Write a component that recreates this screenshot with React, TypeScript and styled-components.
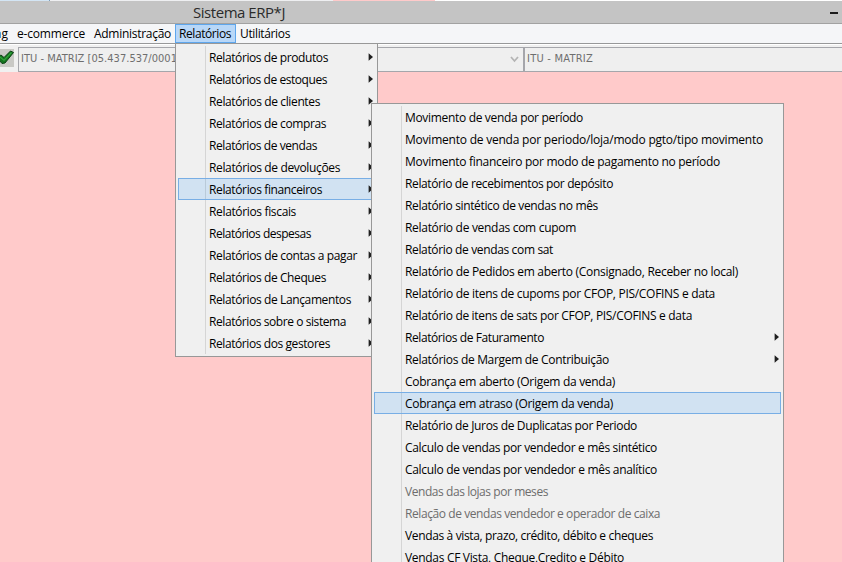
import React, { useLayoutEffect, useRef, useState } from "react";
import styled, { createGlobalStyle, css } from "styled-components";

const GlobalStyle = createGlobalStyle`
  * { box-sizing: border-box; }
  html, body { margin: 0; height: 100%; overflow: hidden; }
  body {
    font: 12px/22px "Open Sans", "Noto Sans", sans-serif;
    color: #000;
    background: #ffcaca;
  }
`;

const Window = styled.div`
  position: relative;
  width: 842px;
  height: 562px;
  overflow: hidden;
  background: #ffcaca;
`;

const BackdropStrip = styled.div`
  display: grid;
  grid-template-columns: 49px 1px 283px 102px 1fr;
  height: 1px;
`;

const StripPart = styled.span<{ $color: string }>`
  background: ${(p) => p.$color};
`;

const TitleBar = styled.header`
  display: flex;
  align-items: center;
  justify-content: space-between;
  height: 23px;
  padding: 0 4px 0 193px;
  background: #c4c4c4;
  border-bottom: 1px solid #a2a2a2;
  font-size: 15px;
  color: #2b2b2b;
`;

const MinimizeIcon = styled.span`
  width: 8px;
  height: 2px;
  margin-top: 2px;
  background: #1c1c1c;
`;

const MenuBar = styled.nav`
  display: flex;
  height: 20px;
  background: #f5f6f8;
  border-bottom: 1px solid #979899;
`;

const MenuBarItem = styled.span<{ $width: number; $active?: boolean; $clipped?: boolean }>`
  display: flex;
  flex: none;
  justify-content: ${(p) => (p.$clipped ? "flex-end" : "flex-start")};
  width: ${(p) => p.$width}px;
  height: 19px;
  line-height: 20px;
  padding: ${(p) => (p.$clipped ? "0 5px 0 0" : "0 0 0 4px")};
  ${(p) =>
    p.$active &&
    css`
      padding-left: 3px;
      line-height: 18px;
      background: #b8d7f8;
      border: 1px solid #5ea6ec;
    `}
`;

const ToolBar = styled.div`
  display: flex;
  height: 28px;
  padding: 2px 0 1px;
  background: #f0f0f0;
  border-top: 1px solid #fff;
`;

const CheckButton = styled.span`
  flex: none;
  width: 18px;
  height: 25px;

  svg {
    display: block;
  }
`;

const Field = styled.div<{ $width: number }>`
  display: flex;
  flex: none;
  align-items: center;
  justify-content: space-between;
  width: ${(p) => p.$width}px;
  height: 25px;
  padding: 0 4px 0 2px;
  border: 1px solid #a5a6ab;
  background: #efefef;
  color: #6e6e6e;
  font: 11px/21px "DejaVu Sans Condensed", "DejaVu Sans", sans-serif;
`;

const FieldText = styled.span`
  display: block;
  margin-top: -2px;
`;

const Menu = styled.div<{ $x: number; $y: number; $width: number }>`
  position: absolute;
  left: ${(p) => p.$x}px;
  top: ${(p) => p.$y}px;
  width: ${(p) => p.$width}px;
  padding: 2px;
  border: 1px solid #989898;
  background: linear-gradient(#d5d5d5, #d5d5d5) 29px 2px / 1px calc(100% - 4px) no-repeat #f0f0f0;
`;

const MenuRow = styled.div<{ $selected?: boolean; $disabled?: boolean }>`
  display: flex;
  align-items: center;
  justify-content: space-between;
  height: 22px;
  padding: 1px 0 0 30px;
  border: 1px solid transparent;
  white-space: nowrap;
  line-height: 20px;
  color: ${(p) => (p.$disabled ? "#6d6d6d" : "#000")};
  ${(p) =>
    p.$selected &&
    css`
      border-color: #78aee5;
      background: linear-gradient(#b9cad9, #b9cad9) 26px 0 / 1px 100% no-repeat #d1e2f2;
    `}
`;

const Label = styled.span`
  display: inline-block;
  white-space: pre;
`;

const ArrowIcon = styled.svg`
  flex: none;
  display: block;
  margin-top: -2px;
`;

/* Text tracked so that it fills the given width. */
function Tracked({ text, width }: { text: string; width: number }) {
  const ref = useRef<HTMLSpanElement>(null);
  const [spacing, setSpacing] = useState(0);
  useLayoutEffect(() => {
    const natural = ref.current!.getBoundingClientRect().width - spacing * text.length;
    setSpacing((width - natural) / text.length);
  }, [text, width]);
  return (
    <Label ref={ref} style={{ letterSpacing: `${spacing}px` }}>
      {text}
    </Label>
  );
}

function SubmenuArrow() {
  return (
    <ArrowIcon width="6" height="8" viewBox="0 0 6 8">
      <path d="M0.6 0.2 L5 4 L0.6 7.8 Z" fill="#1e1e1e" />
    </ArrowIcon>
  );
}

interface Entry {
  text: string;
  width: number;
  submenu?: boolean;
  selected?: boolean;
  disabled?: boolean;
}

const reportGroups: Entry[] = [
  { text: "Relatórios de produtos", width: 119 },
  { text: "Relatórios de estoques", width: 118 },
  { text: "Relatórios de clientes", width: 111 },
  { text: "Relatórios de compras", width: 117 },
  { text: "Relatórios de vendas", width: 108 },
  { text: "Relatórios de devoluções", width: 131 },
  { text: "Relatórios financeiros", width: 113, selected: true },
  { text: "Relatórios fiscais", width: 87 },
  { text: "Relatórios despesas", width: 102 },
  { text: "Relatórios de contas a pagar", width: 148 },
  { text: "Relatórios de Cheques", width: 117 },
  { text: "Relatórios de Lançamentos", width: 142 },
  { text: "Relatórios sobre o sistema", width: 137 },
  { text: "Relatórios dos gestores", width: 121 },
].map((entry) => ({ ...entry, submenu: true }));

const financialReports: Entry[] = [
  { text: "Movimento de venda por período", width: 178 },
  { text: "Movimento de venda por periodo/loja/modo pgto/tipo movimento", width: 358 },
  { text: "Movimento financeiro por modo de pagamento no período", width: 315 },
  { text: "Relatório de recebimentos por depósito", width: 208 },
  { text: "Relatório sintético de vendas no mês", width: 193 },
  { text: "Relatório de vendas com cupom", width: 171 },
  { text: "Relatório de vendas com sat", width: 148 },
  { text: "Relatório de Pedidos em aberto (Consignado, Receber no local)", width: 333 },
  { text: "Relatório de itens de cupoms por CFOP, PIS/COFINS e data", width: 310 },
  { text: "Relatório de itens de sats por CFOP, PIS/COFINS e data", width: 287 },
  { text: "Relatórios de Faturamento", width: 139, submenu: true },
  { text: "Relatórios de Margem de Contribuição", width: 204, submenu: true },
  { text: "Cobrança em aberto (Origem da venda)", width: 210 },
  { text: "Cobrança em atraso (Origem da venda)", width: 208, selected: true },
  { text: "Relatório de Juros de Duplicatas por Periodo", width: 232 },
  { text: "Calculo de vendas por vendedor e mês sintético", width: 252 },
  { text: "Calculo de vendas por vendedor e mês analítico", width: 252 },
  { text: "Vendas das lojas por meses", width: 143, disabled: true },
  { text: "Relação de vendas vendedor e operador de caixa", width: 255, disabled: true },
  { text: "Vendas à vista, prazo, crédito, débito e cheques", width: 248 },
  { text: "Vendas CF Vista, Cheque,Credito e Débito", width: 219 },
];

function MenuPanel({ x, y, width, entries }: { x: number; y: number; width: number; entries: Entry[] }) {
  return (
    <Menu $x={x} $y={y} $width={width}>
      {entries.map((entry) => (
        <MenuRow key={entry.text} $selected={entry.selected} $disabled={entry.disabled}>
          <Tracked text={entry.text} width={entry.width} />
          {entry.submenu && <SubmenuArrow />}
        </MenuRow>
      ))}
    </Menu>
  );
}

export default function App() {
  return (
    <Window>
      <GlobalStyle />
      <BackdropStrip>
        <StripPart $color="#d3e5f4" />
        <StripPart $color="#7d9db8" />
        <StripPart $color="#eeeff1" />
        <StripPart $color="#ffcaca" />
        <StripPart $color="#fff" />
      </BackdropStrip>
      <TitleBar>
        <Tracked text="Sistema ERP*J" width={92} />
        <MinimizeIcon />
      </TitleBar>
      <MenuBar>
        <MenuBarItem $width={13} $clipped>
          <Tracked text="ng" width={14} />
        </MenuBarItem>
        <MenuBarItem $width={77}>
          <Tracked text="e-commerce" width={68} />
        </MenuBarItem>
        <MenuBarItem $width={85}>
          <Tracked text="Administração" width={77} />
        </MenuBarItem>
        <MenuBarItem $width={61} $active>
          <Tracked text="Relatórios" width={52} />
        </MenuBarItem>
        <MenuBarItem $width={60}>
          <Tracked text="Utilitários" width={50} />
        </MenuBarItem>
      </MenuBar>
      <ToolBar>
        <CheckButton>
          <svg width="14" height="22" viewBox="0 0 14 22">
            <path d="M0 2H14V20H0Z" fill="#c9c9c5" />
            <path d="M-3 10.5 L1 8 L4 10.5 L10.5 4 L13.5 5.5 L5 16 L2 16.5 Z" fill="#15741f" stroke="#0b4214" strokeWidth="1" />
            <path d="M0 10 L4 13.3 L11.5 5.5" fill="none" stroke="#32a83c" strokeWidth="1.1" />
          </svg>
        </CheckButton>
        <Field $width={506}>
          <FieldText>
            <Tracked text="ITU - MATRIZ [05.437.537/0001" width={156} />
          </FieldText>
          <svg width="9" height="7" viewBox="0 0 9 7">
            <path d="M1 1 L4.5 5 L8 1" fill="none" stroke="#b4b4b4" strokeWidth="1.8" />
          </svg>
        </Field>
        <Field $width={330}>
          <FieldText>
            <Tracked text="ITU - MATRIZ" width={66} />
          </FieldText>
        </Field>
      </ToolBar>
      <MenuPanel x={175} y={43} width={203} entries={reportGroups} />
      <MenuPanel x={371} y={103} width={413} entries={financialReports} />
    </Window>
  );
}
